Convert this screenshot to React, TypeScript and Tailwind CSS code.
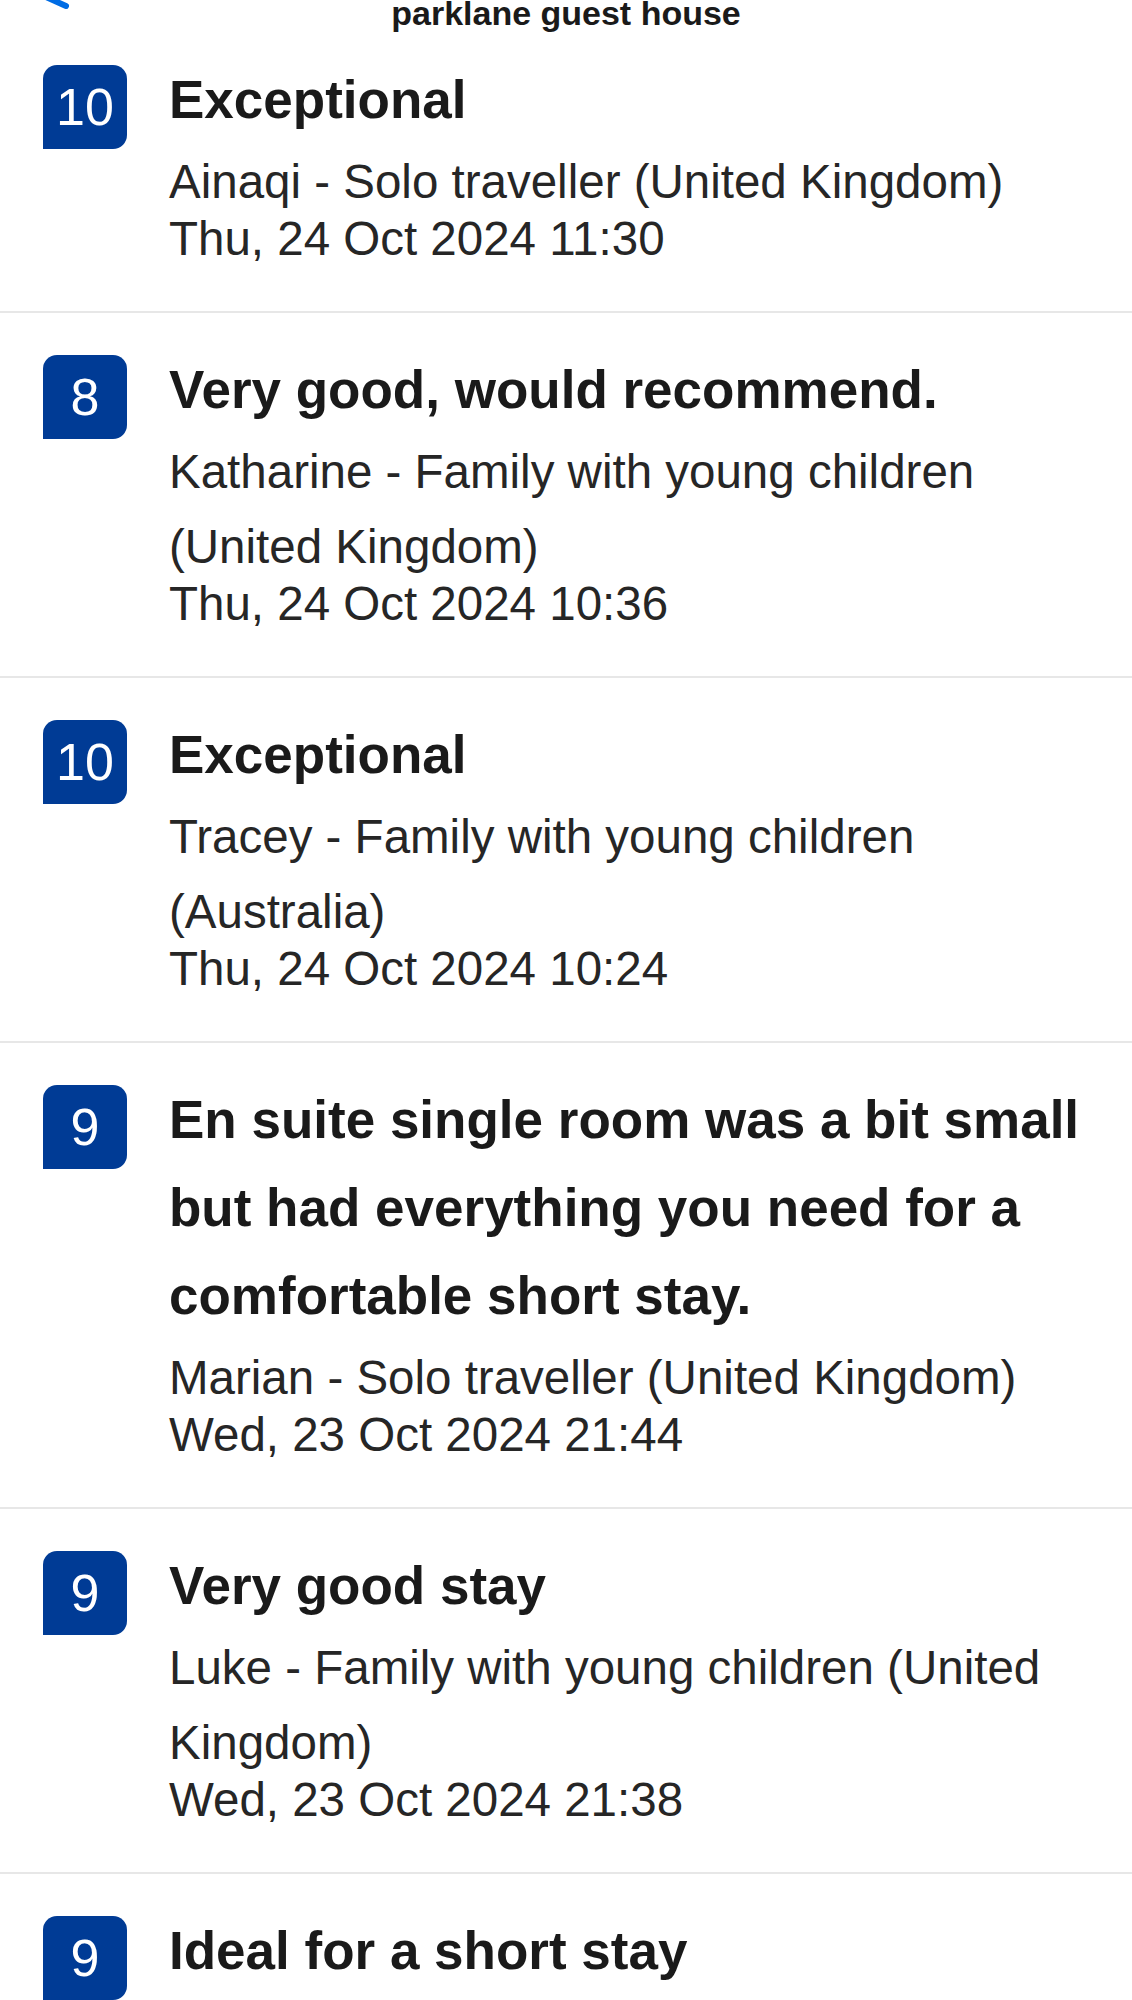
import React from "react";

type Review = {
  score: number;
  title: string;
  author: string;
  date?: string;
};

const reviews: Review[] = [
  {
    score: 10,
    title: "Exceptional",
    author: "Ainaqi - Solo traveller (United Kingdom)",
    date: "Thu, 24 Oct 2024 11:30",
  },
  {
    score: 8,
    title: "Very good, would recommend.",
    author: "Katharine - Family with young children (United Kingdom)",
    date: "Thu, 24 Oct 2024 10:36",
  },
  {
    score: 10,
    title: "Exceptional",
    author: "Tracey - Family with young children (Australia)",
    date: "Thu, 24 Oct 2024 10:24",
  },
  {
    score: 9,
    title: "En suite single room was a bit small but had everything you need for a comfortable short stay.",
    author: "Marian - Solo traveller (United Kingdom)",
    date: "Wed, 23 Oct 2024 21:44",
  },
  {
    score: 9,
    title: "Very good stay",
    author: "Luke - Family with young children (United Kingdom)",
    date: "Wed, 23 Oct 2024 21:38",
  },
  {
    score: 9,
    title: "Ideal for a short stay",
    author: "",
  },
];

function ReviewRow({ review, first }: { review: Review; first: boolean }) {
  return (
    <div
      className={
        first
          ? "flex pl-[43px] pr-[23px] pt-[26px] pb-[52px]"
          : "flex pl-[43px] pr-[23px] pt-[33px] pb-[52px] border-t-2 border-[#e7e7e7]"
      }
    >
      {/* Score badge */}
      <div className="mt-[9px] flex h-[84px] w-[84px] shrink-0 items-center justify-center rounded-t-[14px] rounded-br-[14px] bg-[#003b95] text-[52px] leading-none text-white">
        {review.score}
      </div>

      <div className="ml-[42px] w-[940px]">
        <h3 className="text-[53px] font-bold leading-[88px] text-[#1a1a1a]">{review.title}</h3>
        {review.author && (
          <p className="text-[47.5px] leading-[75px] text-[#262626]">{review.author}</p>
        )}
        {review.date && (
          <p className="text-[47.5px] leading-[40px] text-[#262626]">{review.date}</p>
        )}
      </div>
    </div>
  );
}

export default function App() {
  return (
    <div className="min-h-screen overflow-hidden bg-white font-['Liberation_Sans',Arial,sans-serif]">
      {/* Top bar (scrolled, mostly out of view) */}
      <div className="relative h-[30px]">
        <svg
          className="absolute left-0 top-0"
          width="90"
          height="20"
          viewBox="0 0 90 20"
          fill="none"
        >
          <path d="M28 -22 L46 -3 L66 6" stroke="#006ce4" strokeWidth="6" strokeLinecap="round" strokeLinejoin="round" />
        </svg>
        <p className="text-center text-[34px] font-bold leading-[26px] text-[#1a1a1a]">parklane guest house</p>
      </div>

      {reviews.map((r, i) => (
        <ReviewRow key={i} review={r} first={i === 0} />
      ))}
    </div>
  );
}
